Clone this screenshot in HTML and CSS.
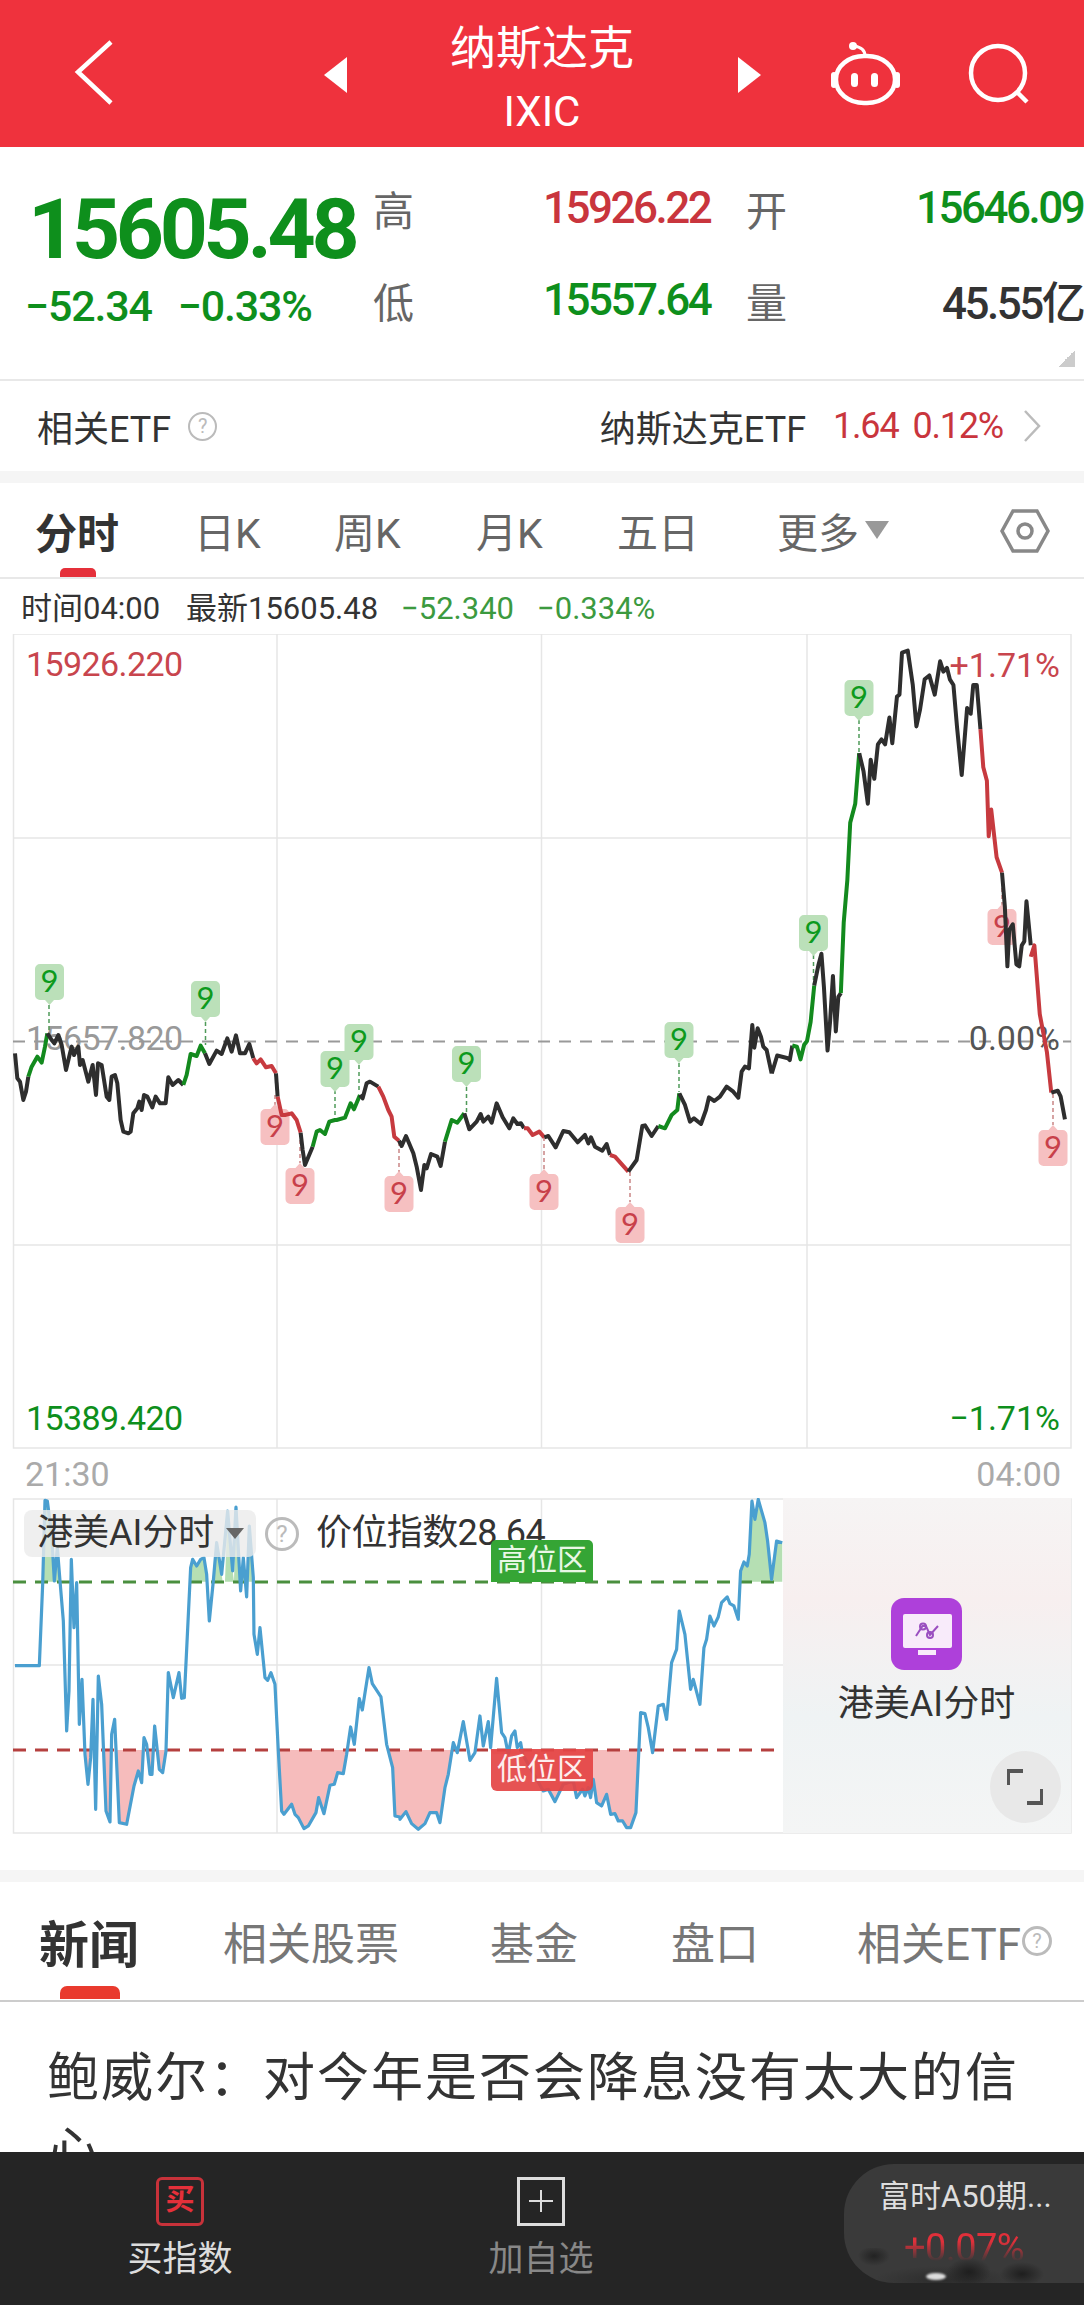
FILE: index.html
```html
<!DOCTYPE html>
<html lang="zh-CN">

<head>
    <meta charset="UTF-8">
    <title>纳斯达克 IXIC</title>
    <link rel="stylesheet" href="styles.css">
</head>

<body>
    <div class="page">
        <header class="topbar">
            <svg class="topbar-icons" viewBox="0 0 1084 147">
                <path class="stroke" d="M111 42 78 72 111 103" />
                <path class="solid" d="M324 75 347 57V93Z" />
                <path class="solid" d="M761 75 738 57V93Z" />
                <rect class="stroke" x="836" y="56" width="59" height="47" rx="28" ry="23" />
                <rect class="solid" x="831" y="72" width="6" height="16" rx="3" />
                <rect class="solid" x="894" y="72" width="6" height="16" rx="3" />
                <path class="thin" d="M865 56C865 50 861 47 854 46" />
                <circle class="solid" cx="853" cy="46" r="4" />
                <rect class="solid" x="851" y="73" width="7" height="14" rx="3.500" />
                <rect class="solid" x="871" y="73" width="7" height="14" rx="3.500" />
                <circle class="stroke" cx="998" cy="73" r="27" />
                <path class="stroke" d="M1018 93 1027 102" />
            </svg>
            <div class="topbar-title">
                <div class="name">纳斯达克</div>
                <div class="code">IXIC</div>
            </div>
        </header>

        <section class="quote">
            <div class="last">
                <div class="last-price">15605.48</div>
                <div class="last-change"><span>−52.34</span><span>−0.33%</span></div>
            </div>
            <div class="stats">
                <span class="stat-label">高</span><span class="stat-value up">15926.22</span>
                <span class="stat-label">开</span><span class="stat-value down right">15646.09</span>
                <span class="stat-label">低</span><span class="stat-value down">15557.64</span>
                <span class="stat-label">量</span><span class="stat-value right">45.55亿</span>
            </div>
            <div class="corner"></div>
        </section>

        <section class="etf-row">
            <div class="etf-left">相关ETF<span class="help">?</span></div>
            <div class="etf-right">纳斯达克ETF<span class="etf-num">1.64</span><span class="etf-num second">0.12%</span>
                <svg class="chevron" viewBox="0 0 18 32">
                    <path d="M2 1 16 16 2 31" />
                </svg>
            </div>
        </section>

        <div class="band"></div>

        <nav class="period-tabs">
            <a class="active">分时</a>
            <a>日K</a>
            <a>周K</a>
            <a>月K</a>
            <a>五日</a>
            <a class="more">更多<i class="caret"></i></a>
            <svg class="hex" viewBox="0 0 50 46">
                <path d="M2 23 13 3H37L48 23 37 43H13Z" />
                <circle cx="25" cy="23" r="7" />
            </svg>
        </nav>

        <div class="info-row">
            <span class="time">时间04:00</span>
            <span class="latest">最新15605.48</span>
            <span class="info-down delta">−52.340</span>
            <span class="info-down pct">−0.334%</span>
        </div>

        <svg class="price-chart" viewBox="0 634 1084 815">
            <defs>
                <path id="tagDown" d="M5 0H24a5 5 0 0 1 5 5V31a5 5 0 0 1-5 5H19L14.5 41 10 36H5a5 5 0 0 1-5-5V5a5 5 0 0 1 5-5Z" />
                <path id="tagUp" d="M14.5 -5 19 0H24a5 5 0 0 1 5 5V31a5 5 0 0 1-5 5H5a5 5 0 0 1-5-5V5a5 5 0 0 1 5-5H10Z" />
            </defs>

            <path class="grid" d="M13.5 634V1448H1071V634ZM13 838H1071M13 1245H1071M277 634V1448M541.500 634V1448M807 634V1448" />
            <path class="base" d="M13 1041.500H1071" />

            <text class="axis up" x="26" y="676">15926.220</text>
            <text class="axis muted" x="26" y="1050">15657.820</text>
            <text class="axis down" x="26" y="1430">15389.420</text>
            <text class="axis up end" x="1060" y="677">+1.71%</text>
            <text class="axis dark end" x="1060" y="1050">0.00%</text>
            <text class="axis down end" x="1060" y="1430">−1.71%</text>

            <path class="tick tick-g" d="M49 1005V1033M205.500 1022V1045M335 1090V1118M359 1065V1093M466.500 1087V1113M679 1063V1092M813.500 955V984M859 720V752" />
            <path class="tick tick-r" d="M275 1095V1105M300 1133V1163M399 1142V1172M544 1137V1169M630 1172V1202M1002 888V905M1053 1094V1125" />

            <g class="tag green" transform="translate(35 964)"><use href="#tagDown" /><text x="14.500" y="28">9</text></g>
            <g class="tag green" transform="translate(191 981)"><use href="#tagDown" /><text x="14.500" y="28">9</text></g>
            <g class="tag green" transform="translate(320.500 1051)"><use href="#tagDown" /><text x="14.500" y="28">9</text></g>
            <g class="tag green" transform="translate(344.500 1024)"><use href="#tagDown" /><text x="14.500" y="28">9</text></g>
            <g class="tag green" transform="translate(452 1046)"><use href="#tagDown" /><text x="14.500" y="28">9</text></g>
            <g class="tag green" transform="translate(664.500 1022)"><use href="#tagDown" /><text x="14.500" y="28">9</text></g>
            <g class="tag green" transform="translate(799 915)"><use href="#tagDown" /><text x="14.500" y="28">9</text></g>
            <g class="tag green" transform="translate(844.500 680)"><use href="#tagDown" /><text x="14.500" y="28">9</text></g>
            <g class="tag pink" transform="translate(260.500 1109)"><use href="#tagUp" /><text x="14.500" y="28">9</text></g>
            <g class="tag pink" transform="translate(285.500 1168)"><use href="#tagUp" /><text x="14.500" y="28">9</text></g>
            <g class="tag pink" transform="translate(384.500 1176)"><use href="#tagUp" /><text x="14.500" y="28">9</text></g>
            <g class="tag pink" transform="translate(529.500 1174)"><use href="#tagUp" /><text x="14.500" y="28">9</text></g>
            <g class="tag pink" transform="translate(615.500 1207)"><use href="#tagUp" /><text x="14.500" y="28">9</text></g>
            <g class="tag pink" transform="translate(987.500 909)"><use href="#tagUp" /><text x="14.500" y="28">9</text></g>
            <g class="tag pink" transform="translate(1038.500 1130)"><use href="#tagUp" /><text x="14.500" y="28">9</text></g>

            <g class="price-line" transform="translate(0 950) scale(.3333)">
                <polyline class="k" points="45,310 52,385 60,395 70,450 78,425 85,380" />
                <polyline class="g" points="85,380 95,350 112,320 125,338 135,290 142,250" />
                <polyline class="k" points="142,250 155,270 163,280 175,255 185,285 198,360 210,310 215,290 222,315 235,290 240,345 248,330 265,395 278,345 288,435 294,340 305,345 320,440 328,450 335,380 345,375 352,400 362,510 370,545 385,550 392,545 400,490 412,475 418,455 425,480 432,435 442,440 457,472 467,440 480,460 497,460 505,382 518,405 535,390 550,405" />
                <polyline class="g" points="550,405 560,375 572,312 590,318 602,287 615,310" />
                <polyline class="k" points="615,310 628,342 650,302 665,312 682,265 695,305 708,256 720,310 735,310 748,282 760,325" />
                <polyline class="r" points="760,325 770,340 782,328 798,352 815,348 828,370" />
                <polyline class="k" points="828,370 833,440" />
                <polyline class="r" points="833,440 845,495 855,495 875,490 890,510 902,548" />
                <polyline class="k" points="902,548 908,600 915,645 938,590" />
                <polyline class="g" points="938,590 950,545 960,540 975,552 988,515 1005,510 1010,510 1035,503 1052,460 1062,478 1080,435" />
                <polyline class="k" points="1080,435 1088,445 1100,400 1110,395 1135,410" />
                <polyline class="r" points="1135,410 1150,440 1165,480 1175,500 1183,560 1197,572" />
            </g>
            <g class="price-line" transform="translate(380 1000) scale(.3333)">
                <polyline class="k" points="57,422 65,438 78,408 100,460 110,500 123,570 133,495 140,505 153,462 172,470 182,498 195,425" />
                <polyline class="g" points="195,425 215,360 232,368 253,340" />
                <polyline class="k" points="253,340 268,388 290,365 302,342 310,365 325,350 335,368 350,310 368,352 388,385 400,355 412,372 423,370 432,385" />
                <polyline class="r" points="432,385 443,385 458,405 478,395 493,412" />
                <polyline class="k" points="493,412 505,408 527,442 550,393 568,397 593,427 615,405 625,430 633,412 645,440 667,452 680,432 690,465" />
                <polyline class="r" points="690,465 705,470 745,515" />
                <polyline class="k" points="745,515 770,480 787,378 795,376 815,408 835,378" />
                <polyline class="g" points="835,378 855,385 875,345 892,330 898,280" />
                <polyline class="k" points="898,280 915,315 930,365 942,355 963,372 978,330 987,292 1003,303 1020,290 1040,260 1060,275 1075,293 1085,215 1095,200 1107,205 1117,75 1123,143 1133,85 1143,110 1150,140 1160,150 1175,220" />
            </g>
            <g class="price-line" transform="translate(520 620) scale(.3597 .3827)">
                <polyline class="k" points="700,1185 715,1138 745,1145 750,1150 757,1112" />
                <polyline class="g" points="757,1112 770,1115 780,1148 790,1110 798,1100 808,1050 818,955" />
                <polyline class="k" points="818,955 830,900 838,872 845,960 855,1125 862,1050 870,930 878,1075 885,985 892,975" />
                <polyline class="g" points="892,975 900,790 910,680 918,530 932,480 943,348" />
                <polyline class="k" points="943,348 955,395 967,480 975,365 985,415 995,325 1005,312 1015,325 1027,255 1035,322 1048,200 1055,195 1062,85 1078,80 1092,170 1102,278 1112,235 1125,155 1138,145 1153,195 1168,108 1177,135 1187,125 1195,155 1205,170 1215,280 1228,405 1243,230 1253,245 1260,170 1270,170 1280,285" />
                <polyline class="r" points="1280,285 1288,385 1298,420 1303,565 1310,495 1325,620 1340,660" />
                <polyline class="k" points="1340,660 1348,750 1355,905 1360,810 1370,795 1380,900 1388,905 1395,850 1402,840 1408,735 1420,850" />
                <polyline class="r" points="1420,880 1430,850 1445,1030 1465,1130 1477,1235" />
                <polyline class="k" points="1477,1235 1495,1230 1503,1245 1515,1305" />
            </g>
        </svg>

        <div class="time-axis"><span>21:30</span><span>04:00</span></div>

        <div class="ai-chart">
            <svg class="ai-svg" viewBox="0 1497 1084 336">
                <path class="grid" d="M13.500 1498V1832H1071V1498ZM13 1664H1071M277 1498V1832M541.500 1498V1832" />
                <g transform="translate(0 1490) scale(.3333)">
                    <path class="fill-g" d="M127 272 135 28 142 30 155 130 163 270 172 170 180 272ZM570 272 572 230 578 205 590 225 602 205 612 200 620 250 623 272ZM638 272 650 155 665 250 668 272ZM675 272 683 60 698 240 702 272 708 48 718 272ZM725 272 730 200 735 272ZM745 272 748 105 760 260 761 272ZM2220 272 2222 240 2232 213 2242 225 2248 190 2256 30 2265 85 2275 25 2282 50 2295 95 2303 150 2315 265 2317 272 2330 150 2347 155V272Z" />
                    <path class="fill-r" d="M258 777 264 880 272 777ZM283 777 287 955 291 777ZM310 777 318 960 330 993 335 777ZM348 777 358 995 380 1000 402 885 415 840 425 875 431 777ZM444 777 450 850 456 850 460 777ZM468 777 478 835 488 845 498 777ZM833 777 845 960 852 970 875 940 885 970 895 980 912 1013 925 1005 948 965 956 920 972 968 990 883 1003 880 1013 845 1030 848 1040 790 1043 777ZM1162 777 1178 830 1185 975 1200 978 1200 985 1218 962 1235 998 1255 1015 1275 998 1290 965 1310 965 1320 995 1335 890 1345 850 1355 777ZM1472 777 1480 790 1525 790 1568 790 1630 900 1645 895 1665 932 1690 880 1720 870 1730 920 1748 895 1755 915 1765 890 1772 920 1780 865 1790 935 1805 945 1820 910 1832 970 1845 968 1855 990 1868 990 1880 1010 1892 1010 1908 965 1918 777Z" />
                </g>
                <path class="level-g" d="M13 1581H783" />
                <path class="level-r" d="M13 1749H783" />
                <g transform="translate(0 1490) scale(.3333)">
                    <polyline class="index-line" points="45,524 118,524 128,280 135,28 142,30 155,130 163,270 172,170 180,270 190,390 200,720 207,600 214,205 222,410 230,275 238,700 246,565 255,790 264,880 272,800 279,625 287,955 295,555 305,640 318,960 330,993 335,730 344,685 358,995 380,1000 402,885 415,840 425,875 432,740 440,760 450,850 456,850 464,705 478,835 488,845 498,780 505,545 520,620 537,545 545,622 553,620 572,230 578,205 590,225 602,205 612,200 620,250 628,390 640,270 650,155 665,250 683,60 698,240 708,48 722,300 730,200 740,318 748,105 760,260 762,430 772,490 780,410 795,560 803,568 813,545 825,580 835,780 845,960 852,970 875,940 885,970 895,980 912,1013 925,1005 948,965 956,920 972,968 990,883 1003,880 1013,845 1030,848 1040,790 1052,708 1063,760 1078,623 1087,657 1107,530 1117,578 1143,618 1160,760 1178,830 1185,975 1200,978 1200,985 1218,962 1235,998 1255,1015 1275,998 1290,965 1310,965 1320,995 1335,890 1345,850 1360,755 1372,785 1390,692 1410,808 1425,785 1440,675 1450,765 1465,692 1472,770 1490,562 1505,725 1515,740 1525,790 1535,735 1545,720 1552,770 1562,755 1568,790 1630,900 1645,895 1665,932 1690,880 1720,870 1730,920 1748,895 1755,915 1765,890 1772,920 1780,865 1790,935 1805,945 1820,910 1832,970 1845,968 1855,990 1868,990 1880,1010 1892,1010 1908,965 1922,665 1935,668 1945,710 1958,785 1975,645 1990,640 2000,685 2015,515 2030,475 2038,360 2055,430 2072,595 2080,565 2100,640 2112,470 2120,445 2130,375 2142,405 2155,378 2165,335 2182,318 2190,338 2202,345 2215,385 2222,240 2232,213 2242,225 2248,190 2256,30 2265,85 2275,25 2282,50 2295,95 2303,150 2315,265 2330,150 2347,155" />
                </g>
            </svg>

            <div class="ai-head">
                <div class="ai-select">港美AI分时<i class="caret small"></i></div>
                <span class="help big">?</span>
                <span class="ai-value">价位指数28.64</span>
            </div>
            <div class="zone zone-high">高位区</div>
            <div class="zone zone-low">低位区</div>

            <aside class="ai-panel">
                <svg class="ai-logo" viewBox="0 0 71 72">
                    <rect class="logo-bg" width="71" height="72" rx="13" />
                    <rect class="logo-screen" x="12" y="16" width="49" height="34" rx="2" />
                    <rect class="logo-screen" x="27" y="52" width="18" height="5" />
                    <path class="logo-wave" d="M25 38 31.500 28H35L39 37 47 28" />
                    <circle class="logo-wave" cx="32" cy="28.500" r="3" />
                    <circle class="logo-wave" cx="39" cy="37" r="3" />
                </svg>
                <div class="ai-name">港美AI分时</div>
                <button class="expand">
                    <svg viewBox="0 0 36 36">
                        <path d="M1 16V2H16M35 20V34H20" />
                    </svg>
                </button>
            </aside>
        </div>

        <div class="band"></div>

        <nav class="news-tabs">
            <a class="active">新闻</a>
            <a>相关股票</a>
            <a>基金</a>
            <a>盘口</a>
            <a>相关ETF<span class="help mid">?</span></a>
        </nav>

        <article class="headline">鲍威尔：对今年是否会降息没有太大的信心</article>

        <footer class="bottombar">
            <div class="action buy">
                <div class="action-box">买</div>
                <div class="action-text">买指数</div>
            </div>
            <div class="action add">
                <div class="action-box plus"></div>
                <div class="action-text">加自选</div>
            </div>
            <div class="float-card">
                <div class="float-name">富时A50期...</div>
                <div class="float-change">+0.07%</div>
                <div class="float-smudge"></div>
            </div>
        </footer>
    </div>
</body>

</html>
```

FILE: styles.css
```css
* {
    box-sizing: border-box;
}

body {
    margin: 0;
    padding: 0;
    background-color: #ffffff;
    font-family: Roboto, "Noto Sans CJK SC", sans-serif;
    color: #333;
}

.page {
    width: 1084px;
    height: 2305px;
    display: flex;
    flex-direction: column;
    overflow: hidden;
}

/* top bar */
.topbar {
    position: relative;
    height: 147px;
    flex: none;
    background-color: #ef323d;
    color: #fff;
    text-align: center;
}

.topbar-icons {
    position: absolute;
    left: 0;
    top: 0;
    width: 1084px;
    height: 147px;
}

.topbar-icons .stroke {
    fill: none;
    stroke: #fff;
    stroke-width: 4.500;
}

.topbar-icons .thin {
    fill: none;
    stroke: #fff;
    stroke-width: 3;
}

.topbar-icons .solid {
    fill: #fff;
}

.topbar-title .name {
    padding-top: 17px;
    font-size: 46px;
    line-height: 62px;
}

.topbar-title .code {
    padding-top: 2px;
    font-size: 42px;
    line-height: 62px;
}

/* quote */
.quote {
    position: relative;
    height: 234px;
    flex: none;
    display: flex;
    border-bottom: 2px solid #e8e8e8;
}

.last {
    width: 373px;
    flex: none;
    padding: 38px 0 0 28px;
    color: #0e8f1c;
}

.last-price {
    font-size: 84px;
    line-height: 90px;
    font-weight: 700;
    letter-spacing: -4.300px;
}

.last-change {
    display: flex;
    gap: 26px;
    margin-left: -3px;
    font-size: 43px;
    font-weight: 500;
    line-height: 62px;
    letter-spacing: -1.200px;
}

.stats {
    flex: 1;
    padding: 15px 2px 0 0;
    display: grid;
    grid-template-columns: 170px 203px 170px 1fr;
    grid-auto-rows: 92px;
    align-items: center;
}

.stat-label {
    font-size: 41px;
    color: #666;
}

.stat-value {
    font-size: 44px;
    font-weight: 500;
    letter-spacing: -2.500px;
    color: #333;
}

.right {
    text-align: right;
}

.up {
    color: #c9353d;
}

.down {
    color: #0e8f1c;
}

.corner {
    position: absolute;
    left: 1058px;
    top: 203px;
    width: 17px;
    height: 17px;
    background: linear-gradient(135deg, transparent 50%, #ccc 50%);
}

/* etf */
.etf-row {
    height: 90px;
    flex: none;
    display: flex;
    justify-content: space-between;
    align-items: center;
    padding: 0 43px 0 37px;
    font-size: 36px;
    color: #333;
}

.etf-left,
.etf-right {
    display: flex;
    align-items: center;
}

.help {
    display: inline-block;
    width: 29px;
    height: 29px;
    margin-left: 17px;
    border: 2px solid #bbb;
    border-radius: 50%;
    font-size: 20px;
    line-height: 25px;
    text-align: center;
    color: #bbb;
}

.help.big {
    width: 34px;
    height: 34px;
    margin: 0;
    border-width: 3px;
    font-size: 24px;
    line-height: 28px;
}

.help.mid {
    width: 30px;
    height: 30px;
    margin-left: 1px;
    border-width: 3px;
    line-height: 24px;
}

.etf-num {
    margin-left: 27px;
    letter-spacing: -1.200px;
    color: #c9353d;
}

.etf-num.second {
    margin-left: 14px;
}

.chevron {
    width: 18px;
    height: 32px;
    margin-left: 20px;
}

.chevron path {
    fill: none;
    stroke: #bbb;
    stroke-width: 2.500;
}

.band {
    height: 12px;
    flex: none;
    background-color: #f5f5f5;
}

/* period tabs */
.period-tabs {
    position: relative;
    height: 96px;
    flex: none;
    display: grid;
    grid-template-columns: 159px 140px 142px 141px 160px 1fr;
    align-items: center;
    padding-left: 38px;
    border-bottom: 2px solid #e8e8e8;
    font-size: 41px;
    color: #666;
}

.period-tabs a {
    margin-left: -3px;
}

.period-tabs .active {
    position: relative;
    font-size: 42px;
    font-weight: 700;
    color: #333;
}

.period-tabs .active::after {
    content: "";
    position: absolute;
    left: 25px;
    top: 68px;
    width: 36px;
    height: 9px;
    border-radius: 5px 5px 0 0;
    background-color: #e5303a;
}

.more {
    display: flex;
    align-items: center;
}

.caret {
    display: inline-block;
    width: 0;
    height: 0;
    margin-left: 6px;
    border-left: 12px solid transparent;
    border-right: 12px solid transparent;
    border-top: 18px solid #999;
}

.caret.small {
    margin-left: 12px;
    border-left-width: 9px;
    border-right-width: 9px;
    border-top: 11px solid #666;
}

.hex {
    position: absolute;
    left: 1000px;
    top: 25px;
    width: 50px;
    height: 46px;
}

.hex path,
.hex circle {
    fill: none;
    stroke: #888;
    stroke-width: 3.500;
}

/* info */
.info-row {
    height: 55px;
    flex: none;
    position: relative;
    font-size: 31px;
    line-height: 60px;
    color: #333;
    white-space: nowrap;
}

.info-row span {
    position: absolute;
}

.time {
    left: 21px;
}

.latest {
    left: 186px;
}

.delta {
    left: 401px;
}

.pct {
    left: 537px;
}

.info-down {
    color: #3c9a3f;
}

/* price chart */
.price-chart {
    display: block;
    width: 1084px;
    height: 815px;
    flex: none;
}

.grid {
    fill: none;
    stroke: #e6e6e6;
    stroke-width: 1.500;
}

.base {
    fill: none;
    stroke: #999;
    stroke-width: 2;
    stroke-dasharray: 12 9;
}

.axis {
    font-size: 34px;
    letter-spacing: -.6px;
}

.axis.up {
    fill: #c8454d;
}

.axis.down {
    fill: #0e8f1c;
}

.axis.muted {
    fill: #999;
}

.axis.dark {
    fill: #555;
}

.axis.end {
    text-anchor: end;
    letter-spacing: 0;
}

.tick {
    fill: none;
    stroke-width: 1.500;
    stroke-dasharray: 4 3;
}

.tick-g {
    stroke: #4f9a5a;
}

.tick-r {
    stroke: #c98585;
}

.tag text {
    font-family: Lato, Roboto, sans-serif;
    font-size: 31px;
    text-anchor: middle;
}

.tag.green use {
    fill: #bbe0b9;
}

.tag.green text {
    fill: #0d9a1d;
}

.tag.pink use {
    fill: #f6c0c1;
}

.tag.pink text {
    fill: #c8404a;
}

.price-line polyline {
    fill: none;
    stroke-width: 4;
    stroke-linejoin: round;
    vector-effect: non-scaling-stroke;
}

.price-line .k {
    stroke: #2e2e2e;
}

.price-line .g {
    stroke: #138a1e;
}

.price-line .r {
    stroke: #c73a3f;
}

.time-axis {
    height: 49px;
    flex: none;
    display: flex;
    justify-content: space-between;
    align-items: center;
    padding: 0 23px 0 25px;
    font-size: 34px;
    color: #aaa;
}

/* ai chart */
.ai-chart {
    position: relative;
    height: 372px;
    flex: none;
}

.ai-svg {
    display: block;
    width: 1084px;
    height: 336px;
}

.fill-g {
    fill: #b5dfb3;
}

.fill-r {
    fill: #f6bcbc;
}

.level-g,
.level-r {
    fill: none;
    stroke-width: 3;
    stroke-dasharray: 13 9;
}

.level-g {
    stroke: #4a8f3f;
}

.level-r {
    stroke: #b5403f;
}

.index-line {
    fill: none;
    stroke: #4a9fd0;
    stroke-width: 3.200;
    stroke-linejoin: round;
    vector-effect: non-scaling-stroke;
}

.ai-head {
    position: absolute;
    left: 24px;
    top: 12px;
    display: flex;
    align-items: center;
    font-size: 36px;
    line-height: 47px;
    white-space: nowrap;
}

.ai-select {
    width: 232px;
    height: 47px;
    display: flex;
    align-items: center;
    padding-left: 13px;
    border-radius: 8px;
    background-color: rgba(235, 235, 235, .8);
    color: #333;
}

.ai-head .help {
    margin-left: 9px;
}

.ai-value {
    margin-left: 17px;
    letter-spacing: -.6px;
    color: #333;
}

.zone {
    position: absolute;
    left: 491px;
    width: 102px;
    height: 42px;
    font-size: 30px;
    line-height: 40px;
    text-align: center;
    color: #e9f7e6;
}

.zone-high {
    top: 42px;
    border-radius: 5px 5px 0 0;
    background-color: #35a535;
}

.zone-low {
    top: 251px;
    border-radius: 0 0 6px 6px;
    background-color: rgba(228, 68, 68, .92);
    color: #fdeeee;
}

.ai-panel {
    position: absolute;
    left: 783px;
    top: 0;
    width: 288px;
    height: 335px;
    background: linear-gradient(180deg, #f6f4f4 0%, #f7efef 30%, #eff3f4 65%, #f4f5f5 100%);
    text-align: center;
}

.ai-logo {
    display: block;
    width: 71px;
    height: 72px;
    margin: 100px 0 0 108px;
}

.logo-bg {
    fill: #ae40da;
}

.logo-screen {
    fill: #f8ebfa;
}

.logo-wave {
    fill: none;
    stroke: #9a4fc0;
    stroke-width: 2;
}

.ai-name {
    margin: 9px 0 0 -1px;
    font-size: 36px;
    line-height: 50px;
    color: #333;
}

.expand {
    position: absolute;
    left: 207px;
    top: 253px;
    width: 71px;
    height: 72px;
    padding: 17px;
    border: 0;
    border-radius: 50%;
    background-color: #e8e8e8;
}

.expand svg {
    display: block;
    width: 36px;
    height: 36px;
}

.expand path {
    fill: none;
    stroke: #555;
    stroke-width: 4;
}

/* news tabs */
.news-tabs {
    height: 120px;
    flex: none;
    display: grid;
    grid-template-columns: 183px 267px 181px 186px 1fr;
    align-items: center;
    padding-left: 40px;
    border-bottom: 2px solid #ccc;
    font-size: 44px;
    color: #777;
    white-space: nowrap;
}

.news-tabs a {
    display: flex;
    align-items: center;
}

.news-tabs .active {
    position: relative;
    margin-left: -1px;
    font-size: 50px;
    font-weight: 700;
    color: #333;
}

.news-tabs .active::after {
    content: "";
    position: absolute;
    left: 21px;
    top: 81px;
    width: 60px;
    height: 13px;
    border-radius: 7px 7px 0 0;
    background-color: #e93a2e;
}

.headline {
    flex: 1;
    min-height: 0;
    overflow: hidden;
    padding: 40px 30px 0 47px;
    font-size: 52px;
    line-height: 74px;
    letter-spacing: 2px;
    color: #333;
}

/* bottom bar */
.bottombar {
    height: 153px;
    flex: none;
    display: grid;
    grid-template-columns: 360px 362px 1fr;
    background-color: #252525;
}

.action {
    padding-top: 25px;
    text-align: center;
}

.action-box {
    width: 48px;
    height: 49px;
    margin: 0 auto;
    border: 3px solid #c8323a;
    border-radius: 6px;
    font-size: 29px;
    font-weight: 700;
    line-height: 41px;
    color: #e5303a;
}

.action-box.plus {
    position: relative;
    border-color: #ddd;
    border-radius: 0;
}

.action-box.plus::before,
.action-box.plus::after {
    content: "";
    position: absolute;
    background-color: #ddd;
}

.action-box.plus::before {
    left: 9px;
    top: 20px;
    width: 24px;
    height: 2px;
}

.action-box.plus::after {
    left: 20px;
    top: 10px;
    width: 2px;
    height: 22px;
}

.action-text {
    margin-top: 9px;
    font-size: 35px;
    line-height: 50px;
    color: #ddd;
}

.add .action-text {
    color: #888;
}

.float-card {
    position: relative;
    height: 119px;
    margin: 12px 0 0 122px;
    padding: 10px 0 0 35px;
    border-radius: 50px 0 0 50px;
    background-color: #3a3a3a;
    overflow: hidden;
}

.float-name {
    font-size: 31px;
    line-height: 46px;
    color: #ddd;
    white-space: nowrap;
}

.float-change {
    height: 30px;
    margin: 11px 0 0 25px;
    overflow: hidden;
    font-size: 38px;
    line-height: 34px;
    letter-spacing: -.6px;
    color: #e0303a;
    -webkit-mask-image: linear-gradient(#000 35%, transparent 100%);
    mask-image: linear-gradient(#000 35%, transparent 100%);
}

.float-smudge {
    position: absolute;
    left: 0;
    top: 84px;
    width: 240px;
    height: 35px;
    background:
        radial-gradient(ellipse 16px 10px at 30px 8px, #222, transparent),
        radial-gradient(ellipse 22px 14px at 125px 24px, #1e1e1e, transparent),
        radial-gradient(ellipse 22px 12px at 178px 26px, #1e1e1e, transparent),
        radial-gradient(ellipse 70px 14px at 100px 32px, #2c2c2c, transparent);
}

.float-smudge::after {
    content: "";
    position: absolute;
    left: 82px;
    top: 25px;
    width: 20px;
    height: 7px;
    border-radius: 50%;
    background-color: #ddd;
    filter: blur(1px);
}
```
